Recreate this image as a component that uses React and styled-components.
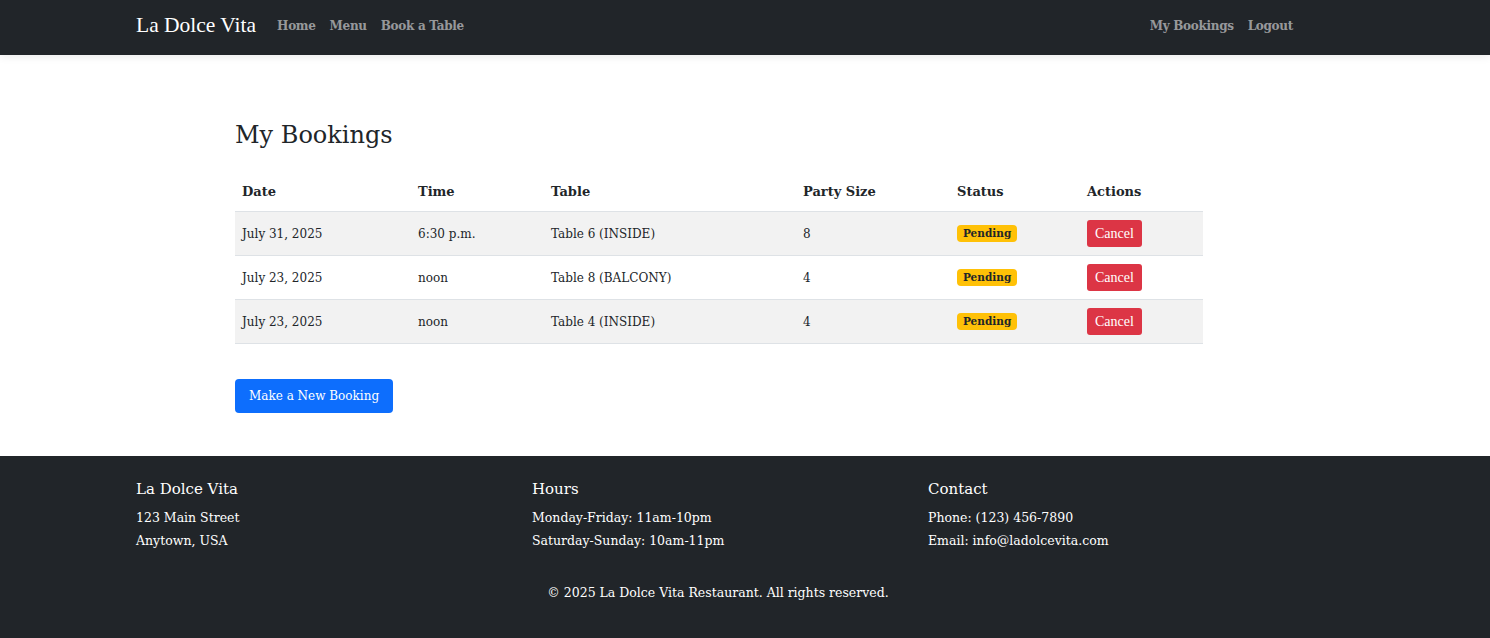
import React from 'react'
import styled, { createGlobalStyle } from 'styled-components'

const GlobalStyle = createGlobalStyle`
    body {
        margin: 0;
        font-family: "DejaVu Serif", Georgia, serif;
        font-size: 12px;
        color: #212529;
        background: #fff;
    }
`

const bookings = [
    { date: 'July 31, 2025', time: '6:30 p.m.', table: 'Table 6 (INSIDE)', size: 8 },
    { date: 'July 23, 2025', time: 'noon', table: 'Table 8 (BALCONY)', size: 4 },
    { date: 'July 23, 2025', time: 'noon', table: 'Table 4 (INSIDE)', size: 4 },
]

const columns = [
    { label: 'Date', width: 176 },
    { label: 'Time', width: 133 },
    { label: 'Table', width: 252 },
    { label: 'Party Size', width: 154 },
    { label: 'Status', width: 130 },
    { label: 'Actions', width: 123 },
]

export default function App() {
    return (
        <>
            <GlobalStyle />
            <Navbar>
                <Container>
                    <Brand href="#">La Dolce Vita</Brand>
                    <NavLink href="#">Home</NavLink>
                    <NavLink href="#">Menu</NavLink>
                    <NavLink href="#">Book a Table</NavLink>
                    <NavRight>
                        <NavLink href="#">My Bookings</NavLink>
                        <NavLink href="#">Logout</NavLink>
                    </NavRight>
                </Container>
            </Navbar>

            <Main>
                <Content>
                    <Title>My Bookings</Title>
                    <Table>
                        <colgroup>
                            {columns.map(c => <col key={c.label} width={c.width} />)}
                        </colgroup>
                        <thead>
                            <tr>
                                {columns.map(c => <Th key={c.label}>{c.label}</Th>)}
                            </tr>
                        </thead>
                        <tbody>
                            {bookings.map((b, i) => (
                                <Row key={i} striped={i % 2 === 0}>
                                    <Td>{b.date}</Td>
                                    <Td>{b.time}</Td>
                                    <Td>{b.table}</Td>
                                    <Td>{b.size}</Td>
                                    <Td><Badge>Pending</Badge></Td>
                                    <Td><CancelButton>Cancel</CancelButton></Td>
                                </Row>
                            ))}
                        </tbody>
                    </Table>
                    <PrimaryButton href="#">Make a New Booking</PrimaryButton>
                </Content>
            </Main>

            <Footer>
                <Container column>
                    <FooterGrid>
                        <FooterCol>
                            <FooterHeading>La Dolce Vita</FooterHeading>
                            <FooterLine>123 Main Street</FooterLine>
                            <FooterLine>Anytown, USA</FooterLine>
                        </FooterCol>
                        <FooterCol>
                            <FooterHeading>Hours</FooterHeading>
                            <FooterLine>Monday-Friday: 11am-10pm</FooterLine>
                            <FooterLine>Saturday-Sunday: 10am-11pm</FooterLine>
                        </FooterCol>
                        <FooterCol>
                            <FooterHeading>Contact</FooterHeading>
                            <FooterLine>Phone: (123) 456-7890</FooterLine>
                            <FooterLine>Email: info@ladolcevita.com</FooterLine>
                        </FooterCol>
                    </FooterGrid>
                    <Copyright>© 2025 La Dolce Vita Restaurant. All rights reserved.</Copyright>
                </Container>
            </Footer>
        </>
    )
}

const Navbar = styled.nav`
    height: 55px;
    box-sizing: border-box;
    padding-bottom: 4px;
    background: #212529;
    box-shadow: 0 2px 8px rgba(0, 0, 0, 0.08);
    position: relative;
`

const Container = styled.div`
    margin-left: 124px;
    width: 1188px;
    box-sizing: border-box;
    padding: 0 12px;
    height: ${props => props.column ? 'auto' : '100%'};
    display: flex;
    flex-direction: ${props => props.column ? 'column' : 'row'};
    align-items: ${props => props.column ? 'stretch' : 'center'};
`

const Brand = styled.a`
    font-family: "Liberation Serif", "Times New Roman", serif;
    font-size: 21.5px;
    color: #fff;
    text-decoration: none;
    margin-right: 14px;
`

const NavLink = styled.a`
    font-size: 12px;
    font-weight: bold;
    letter-spacing: -0.3px;
    color: rgba(255, 255, 255, 0.55);
    text-decoration: none;
    padding: 0 7px;
`

const NavRight = styled.div`
    margin-left: auto;
    display: flex;
`

const Main = styled.main`
    padding: 65px 0 43px;
`

const Content = styled.div`
    margin-left: 235px;
    width: 968px;
`

const Title = styled.h2`
    font-size: 24px;
    font-weight: normal;
    line-height: 30px;
    margin: 0 0 22px;
`

const Table = styled.table`
    width: 100%;
    border-collapse: collapse;
    table-layout: fixed;
`

const Th = styled.th`
    text-align: left;
    font-size: 13px;
    font-weight: bold;
    line-height: 21px;
    padding: 9px 7px;
    border-bottom: 1px solid #dee2e6;
`

const Row = styled.tr`
    background: ${props => props.striped ? '#f2f2f2' : '#fff'};
`

const Td = styled.td`
    padding: 8px 7px;
    height: 27px;
    vertical-align: middle;
    border-bottom: 1px solid #dee2e6;
`

const Badge = styled.span`
    display: inline-block;
    background: #ffc107;
    color: #212529;
    font-size: 10.5px;
    font-weight: bold;
    line-height: 11px;
    padding: 3px 6px;
    border-radius: 4px;
`

const CancelButton = styled.button`
    font-family: "Liberation Serif", "Times New Roman", serif;
    font-size: 14px;
    color: #fff;
    background: #dc3545;
    border: none;
    border-radius: 3px;
    height: 27px;
    padding: 0 8px;
`

const PrimaryButton = styled.a`
    display: inline-flex;
    align-items: center;
    height: 34px;
    padding: 0 14px;
    margin-top: 35px;
    background: #0d6efd;
    color: #fff;
    font-size: 12px;
    text-decoration: none;
    border-radius: 4px;
`

const Footer = styled.footer`
    background: #212529;
    color: #fff;
    padding: 24px 0 36px;
`

const FooterGrid = styled.div`
    display: grid;
    grid-template-columns: repeat(3, 1fr);
    margin: 0 -12px;
`

const FooterCol = styled.div`
    padding: 0 12px;
`

const FooterHeading = styled.h5`
    font-size: 15px;
    font-weight: normal;
    line-height: 18px;
    margin: 0 0 8px;
`

const FooterLine = styled.p`
    margin: 0;
    font-size: 12.5px;
    line-height: 23px;
`

const Copyright = styled.p`
    margin: 29px 0 0;
    text-align: center;
    font-size: 12.5px;
    line-height: 23px;
`
